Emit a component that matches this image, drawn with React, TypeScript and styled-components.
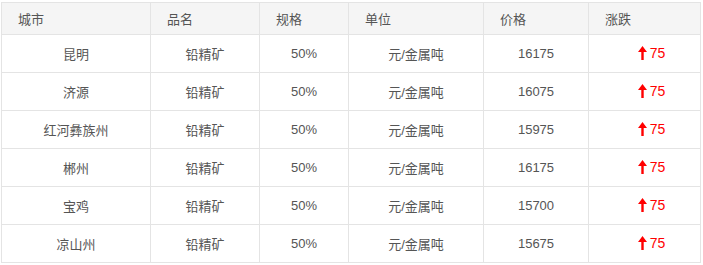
import React from 'react'
import styled, { createGlobalStyle } from 'styled-components'

type Row = {
  city: string
  product: string
  spec: string
  unit: string
  price: string
  change: string
}

const rows: Row[] = [
  { city: '昆明', product: '铅精矿', spec: '50%', unit: '元/金属吨', price: '16175', change: '75' },
  { city: '济源', product: '铅精矿', spec: '50%', unit: '元/金属吨', price: '16075', change: '75' },
  { city: '红河彝族州', product: '铅精矿', spec: '50%', unit: '元/金属吨', price: '15975', change: '75' },
  { city: '郴州', product: '铅精矿', spec: '50%', unit: '元/金属吨', price: '16175', change: '75' },
  { city: '宝鸡', product: '铅精矿', spec: '50%', unit: '元/金属吨', price: '15700', change: '75' },
  { city: '凉山州', product: '铅精矿', spec: '50%', unit: '元/金属吨', price: '15675', change: '75' },
]

const widths = [149, 109, 89, 135, 105, 112]
const heads = ['城市', '品名', '规格', '单位', '价格', '涨跌']

const GlobalStyle = createGlobalStyle`
  body {
    margin: 0;
    background: #fff;
  }
`

const Wrap = styled.div`
  padding: 2px 0 0 1px;
`

const Table = styled.table`
  border-collapse: collapse;
  table-layout: fixed;
  width: 700px;
  font-family: 'Liberation Sans', 'Noto Sans CJK SC', sans-serif;
  font-size: 13px;
  color: #555;
`

const Th = styled.th`
  height: 31px;
  padding: 0 0 0 16px;
  text-align: left;
  font-weight: 400;
  background: #f5f5f5;
  border: 1px solid #e4e4e4;
  color: #555;
`

const Td = styled.td`
  height: 37px;
  padding: 0;
  text-align: center;
  border: 1px solid #e4e4e4;
`

const Up = styled.span`
  display: inline-flex;
  align-items: center;
  gap: 3px;
  color: #ff0000;
  font-size: 14px;
  padding-left: 14px;
`

const Arrow = () => (
  <svg width="9" height="14" viewBox="0 0 9 14">
    <path d="M4.5 0 L9 6 L5.7 6 L5.7 14 L3.3 14 L3.3 6 L0 6 Z" fill="#ff0000" />
  </svg>
)

export default function App() {
  return (
    <Wrap>
      <GlobalStyle />
      <Table>
        <colgroup>
          {widths.map((w, i) => (
            <col key={i} style={{ width: w }} />
          ))}
        </colgroup>
        <thead>
          <tr>
            {heads.map((h) => (
              <Th key={h}>{h}</Th>
            ))}
          </tr>
        </thead>
        <tbody>
          {rows.map((r, i) => (
            <tr key={i}>
              <Td>{r.city}</Td>
              <Td>{r.product}</Td>
              <Td>{r.spec}</Td>
              <Td>{r.unit}</Td>
              <Td>{r.price}</Td>
              <Td>
                <Up>
                  <Arrow />
                  {r.change}
                </Up>
              </Td>
            </tr>
          ))}
        </tbody>
      </Table>
    </Wrap>
  )
}
